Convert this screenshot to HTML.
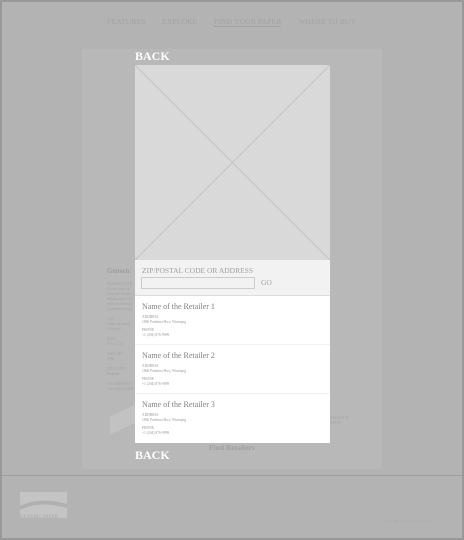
<!DOCTYPE html>
<html><head><style>
*{margin:0;padding:0;box-sizing:border-box}
body{width:464px;height:540px;background:#b3b3b3;font-family:"Liberation Serif",serif;position:relative;overflow:hidden}
.frame{position:absolute;left:0;top:0;width:464px;height:540px;border:2px solid #999}
.a{position:absolute}
.nav{top:17px;font-size:7.8px;color:#a3a3a3}
.panel{left:82px;top:49px;width:300px;height:420px;background:#b8b8b8}
.back{color:#fff;font-weight:bold;font-size:12px;left:135px}
.modal{left:135px;top:65px;width:195px;height:378px;background:#fff}
.img{position:absolute;left:0;top:0;width:195px;height:195px;background:#d9d9d9}
.form{position:absolute;left:0;top:195px;width:195px;height:36px;background:#f2f2f2;border-bottom:1px solid #ddd}
.item{position:absolute;left:7px;color:#999}
.item h4{font-size:8px;font-weight:normal;color:#808080;margin-bottom:4px}
.item p{font-size:3.6px;line-height:5px;margin-bottom:3px}
.sep{position:absolute;left:0;width:195px;height:1px;background:#f2f2f2}
.small{font-size:4px;color:#a5a5a5;line-height:5px}
</style></head><body>
<div class="frame"></div>
<div class="a nav" style="left:107px">FEATURES</div>
<div class="a nav" style="left:162px">EXPLORE</div>
<div class="a nav" style="left:214px;border-bottom:1px solid #a3a3a3">FIND YOUR PAPER</div>
<div class="a nav" style="left:298px">WHERE TO BUY</div>
<div class="a panel"></div>
<div class="a" style="left:107px;top:267px;font-size:7px;color:#9e9e9e;font-weight:bold">Generic</div>
<div class="a small" style="left:107px;top:281px;width:28px">PRODUCT DE<br>lo rue habitant<br>aliquam Integer<br>ullamcorper sol<br>vehi, ac tabendi<br>accumsan sequi<br><br>USE<br>Nam vel iaculi<br>euismod.<br><br>SIZE<br>8 1/2 x 11<br><br>WEIGHT<br>20lb<br><br>TEXTURE<br>Regular<br><br>ENVIRONME<br>Vehicula at nibh</div>
<div class="a" style="left:110px;top:410px;width:28px;height:18px;background:#c2c2c2;transform:skewY(-25deg)"></div>
<div class="a small" style="left:330px;top:415px">PROD JCB<br>$19.99</div>
<div class="a" style="left:209px;top:443px;font-size:7.5px;color:#a0a0a0;font-weight:bold">Find Retailers</div>
<div class="a back" style="top:49px">BACK</div>
<div class="a back" style="top:448px">BACK</div>
<div class="a modal">
 <div class="img"><svg width="195" height="195"><line x1="0" y1="0" x2="195" y2="195" stroke="#bbb" stroke-width=".7"/><line x1="195" y1="0" x2="0" y2="195" stroke="#bbb" stroke-width=".7"/></svg></div>
 <div class="form">
  <div class="a" style="left:7px;top:6px;font-size:7.5px;color:#a0a0a0">ZIP/POSTAL CODE OR ADDRESS</div>
  <div class="a" style="left:6px;top:17px;width:114px;height:12px;border:1px solid #ccc;background:#f2f2f2"></div>
  <div class="a" style="left:126px;top:18px;font-size:7.5px;color:#a0a0a0">GO</div>
 </div>
 <div class="item" style="top:237px"><h4>Name of the Retailer 1</h4><p>ADDRESS<br>1866 Pembina Hwy, Winnipeg</p><p>PHONE<br>+1 (204) 876-9999</p></div>
 <div class="sep" style="top:279px"></div>
 <div class="item" style="top:286px"><h4>Name of the Retailer 2</h4><p>ADDRESS<br>1866 Pembina Hwy, Winnipeg</p><p>PHONE<br>+1 (204) 876-9999</p></div>
 <div class="sep" style="top:328px"></div>
 <div class="item" style="top:335px"><h4>Name of the Retailer 3</h4><p>ADDRESS<br>1866 Pembina Hwy, Winnipeg</p><p>PHONE<br>+1 (204) 876-9999</p></div>
</div>
<div class="a" style="left:2px;top:475px;width:460px;height:1px;background:#9e9e9e"></div>
<div class="a" style="left:20px;top:492px;width:47px;height:26px;background:#c4c4c4"></div>
<svg class="a" style="left:20px;top:492px" width="47" height="26"><path d="M0 14 Q20 4 47 12 L47 16 Q20 8 0 18Z" fill="#b0b0b0"/></svg>
<div class="a" style="left:20px;top:515px;font-size:5px;color:#a8a8a8">GENERIC PAPER</div>
<div class="a" style="left:385px;top:519px;font-size:3.5px;color:#a8a8a8">Copyright information goes here</div>
</body></html>
